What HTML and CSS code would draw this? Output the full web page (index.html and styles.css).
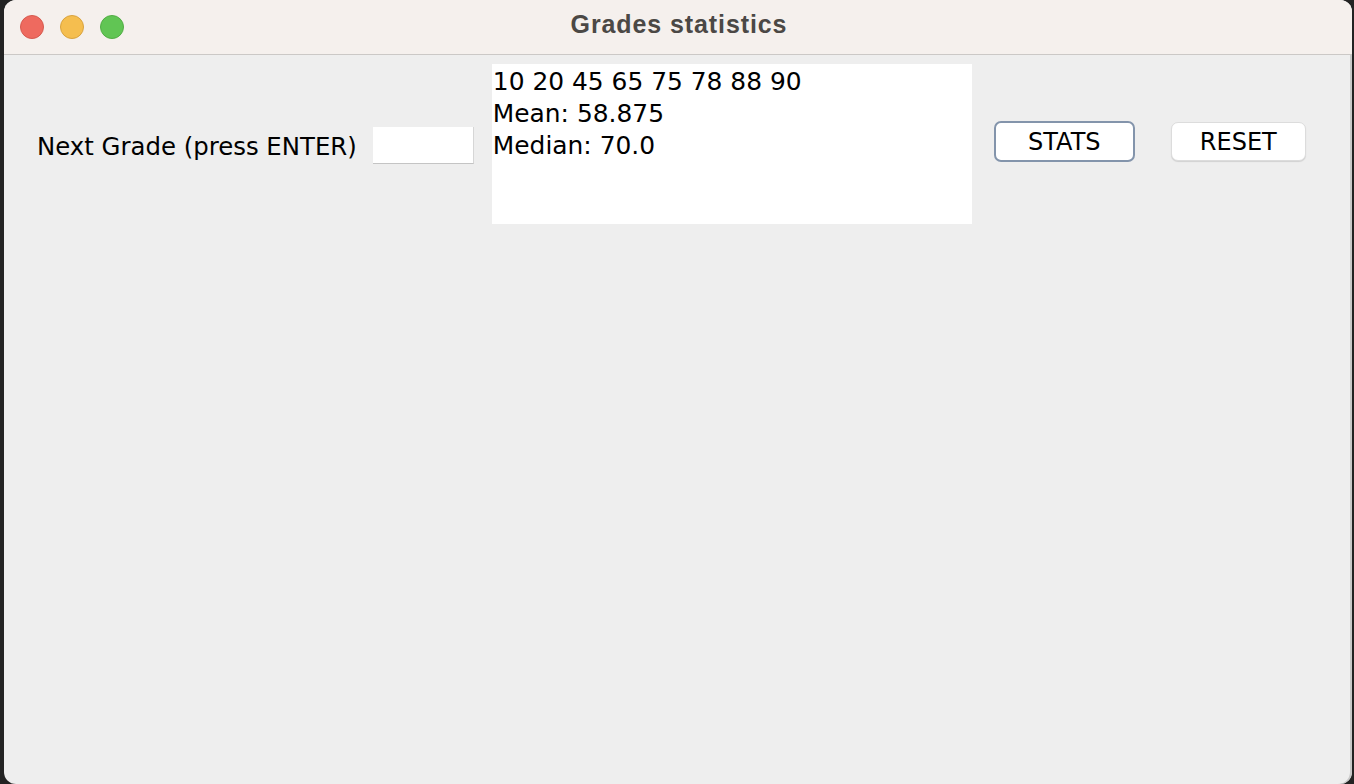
FILE: index.html
```html
<!DOCTYPE html>
<html>
<head>
<meta charset="utf-8">
<title>Grades statistics</title>
<link rel="stylesheet" href="styles.css">
</head>
<body>
<div class="desktop">
  <div class="window">
    <div class="titlebar">
      <div class="lights">
        <span class="light red"></span>
        <span class="light yellow"></span>
        <span class="light green"></span>
      </div>
      <div class="title">Grades statistics</div>
    </div>
    <div class="content">
      <div class="row">
        <span class="label">Next Grade (press ENTER)</span>
        <div class="field"></div>
        <div class="area">10 20 45 65 75 78 88 90<br>Mean: 58.875<br>Median: 70.0</div>
        <button class="btn stats">STATS</button>
        <button class="btn reset">RESET</button>
      </div>
    </div>
  </div>
</div>
</body>
</html>
```
FILE: styles.css
```css
html, body {
  margin: 0;
  padding: 0;
  background: #232323;
  width: 1354px;
  height: 784px;
  overflow: hidden;
}
.desktop {
  display: flex;
  height: 784px;
  padding-left: 4px;
}
.window {
  width: 1348px;
  height: 784px;
  border-radius: 12px;
  overflow: hidden;
  background: #eeeeee;
  display: flex;
  flex-direction: column;
  box-shadow: inset -2px 0 0 #c9c9c9;
}
.titlebar {
  height: 54px;
  flex: none;
  background: #f5f0ed;
  border-bottom: 1px solid #cbc8c6;
  display: flex;
  align-items: center;
  position: relative;
}
.lights {
  display: flex;
  gap: 16px;
  padding-left: 16px;
  margin-top: -1px;
}
.light {
  width: 24px;
  height: 24px;
  border-radius: 50%;
  box-sizing: border-box;
}
.red { background: #ee6a5f; border: 1px solid #d65a4f; }
.yellow { background: #f5be4f; border: 1px solid #d9a33f; }
.green { background: #61c554; border: 1px solid #52ad45; }
.title {
  position: absolute;
  left: 0;
  right: 0;
  top: 10px;
  text-align: center;
  font-family: "Liberation Sans", Arial, sans-serif;
  font-weight: bold;
  font-size: 25px;
  letter-spacing: 0.9px;
  color: #4b4845;
  padding-left: 2px;
}
.content {
  flex: 1;
  padding-top: 9px;
}
.row {
  display: flex;
  align-items: center;
  font-family: "DejaVu Sans", Verdana, sans-serif;
  color: #000;
}
.label {
  margin-left: 33px;
  font-size: 24.4px;
  color: #000;
  margin-top: 4px;
}
.field {
  margin-left: 16px;
  width: 101px;
  height: 37px;
  box-sizing: border-box;
  background: #fff;
  border-right: 1px solid #d6d6d6;
  border-bottom: 1px solid #c4c4c4;
  margin-top: 2px;
}
.area {
  margin-left: 18px;
  width: 480px;
  height: 160px;
  box-sizing: border-box;
  background: #fff;
  padding: 2px 0 0 1px;
  font-size: 24.9px;
  line-height: 32px;
}
.btn {
  font-family: "DejaVu Sans", Verdana, sans-serif;
  font-size: 24px;
  color: #000;
  background: #fff;
  box-sizing: border-box;
  border-radius: 7px;
  padding: 0;
  margin-top: -5px;
}
.stats {
  margin-left: 22px;
  width: 141px;
  height: 41px;
  border: 2px solid #8394ab;
}
.reset {
  margin-left: 36px;
  width: 135px;
  height: 39px;
  border: 1px solid #dcdcdc;
  box-shadow: 0 1px 1px rgba(0,0,0,0.12);
}
```
